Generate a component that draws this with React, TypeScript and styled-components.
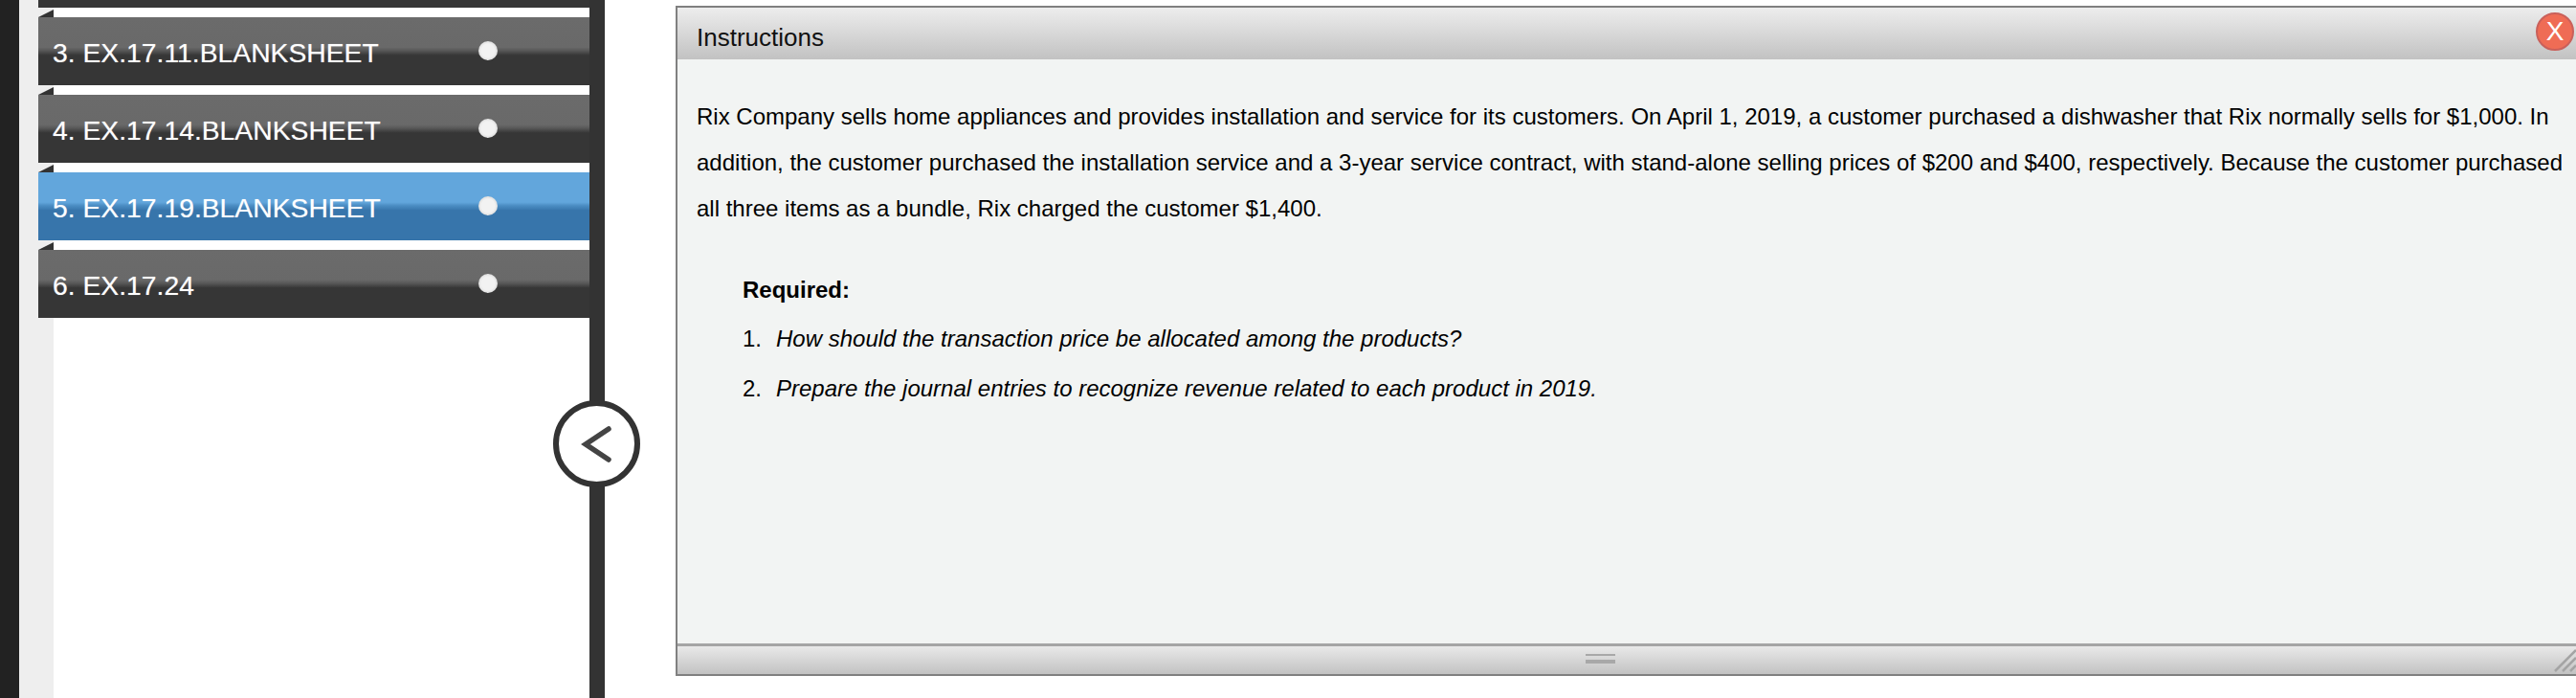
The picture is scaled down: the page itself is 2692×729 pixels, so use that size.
import React from 'react'
import styled, { createGlobalStyle } from 'styled-components'

const Global = createGlobalStyle`
html, body {
  margin: 0;
  padding: 0;
  background: #fff;
  overflow: hidden;
}
`

const items = [
  { label: '', active: false },
  { label: '3. EX.17.11.BLANKSHEET', active: false },
  { label: '4. EX.17.14.BLANKSHEET', active: false },
  { label: '5. EX.17.19.BLANKSHEET', active: true },
  { label: '6. EX.17.24', active: false },
]

const App = () => {
  return (
    <Page>
      <Global />
      <Sidebar>
        <Rail />
        <Gutter />
        <Menu>
          {items.map((item) => (
            <MenuItem key={item.label} $active={item.active}>
              <Notch />
              <Label>{item.label}</Label>
              {item.label && <Dot />}
            </MenuItem>
          ))}
        </Menu>
        <Divider />
        <Toggle>
          <svg width="40" height="46" viewBox="0 0 40 46">
            <path d="M32 7 L8 23 L32 39" fill="none" stroke="#444" strokeWidth="5.5" strokeLinecap="round" strokeLinejoin="miter" />
          </svg>
        </Toggle>
      </Sidebar>
      <Panel>
        <Header>
          Instructions
          <Close>X</Close>
        </Header>
        <Body>
          <Intro>
            Rix Company sells home appliances and provides installation and service for its customers. On April 1, 2019, a customer purchased a dishwasher that Rix normally sells for $1,000. In addition, the customer purchased the installation service and a 3-year service contract, with stand-alone selling prices of $200 and $400, respectively. Because the customer purchased all three items as a bundle, Rix charged the customer $1,400.
          </Intro>
          <Required>
            <RequiredTitle>Required:</RequiredTitle>
            <Question>
              <Num>1.</Num>
              <em>How should the transaction price be allocated among the products?</em>
            </Question>
            <Question>
              <Num>2.</Num>
              <em>Prepare the journal entries to recognize revenue related to each product in 2019.</em>
            </Question>
          </Required>
        </Body>
        <Footer>
          <Grip />
          <ResizeHandle>
            <svg width="24" height="24" viewBox="0 0 24 24">
              <path d="M2 23 L24 1 M10 23 L24 9 M18 23 L24 17" stroke="#a4a4a4" strokeWidth="2.5" fill="none" />
            </svg>
          </ResizeHandle>
        </Footer>
      </Panel>
    </Page>
  )
}

export default App

const Page = styled.div`
  display: flex;
  width: 2692px;
  height: 729px;
  overflow: hidden;
  font-family: "Liberation Sans", Arial, sans-serif;
`
const Sidebar = styled.div`
  position: relative;
  display: flex;
  flex: 0 0 632px;
  height: 729px;
`
const Rail = styled.div`
  flex: 0 0 20px;
  background: #222222;
`
const Gutter = styled.div`
  flex: 0 0 20px;
  background: #eeeeee;
`
const Menu = styled.div`
  flex: 0 0 576px;
  display: flex;
  flex-direction: column;
  gap: 10px;
  margin-top: -63px;
  background: linear-gradient(90deg, #eeeeee 16px, #ffffff 16px);
`
const MenuItem = styled.div<{ $active: boolean }>`
  position: relative;
  display: flex;
  align-items: center;
  flex: 0 0 71px;
  box-sizing: border-box;
  background: ${(p) =>
    p.$active
      ? 'linear-gradient(180deg, #62a6dc 0%, #62a6dc 44%, #4b8dc3 49%, #3775ab 56%, #3775ab 100%)'
      : 'linear-gradient(180deg, #6b6b6b 0%, #696969 44%, #585858 49%, #363636 56%, #363636 100%)'};
`
const Notch = styled.span`
  position: absolute;
  left: 0;
  top: -8px;
  width: 0;
  height: 0;
  border-bottom: 8px solid #333333;
  border-left: 16px solid transparent;
`
const Label = styled.span`
  padding: 2px 0 0 15px;
  color: #ffffff;
  font-size: 28.3px;
  line-height: 34px;
  white-space: nowrap;
  text-shadow: 0 0 1px rgba(255, 255, 255, 0.5);
`
const Dot = styled.span`
  position: absolute;
  left: 460px;
  top: 25px;
  width: 20px;
  height: 20px;
  border-radius: 50%;
  background: radial-gradient(circle, #f2f2f2 50%, #dcdcdc 72%, #a8a8a8 100%);
`
const Divider = styled.div`
  flex: 0 0 16px;
  background: #333333;
`
const Toggle = styled.div`
  position: absolute;
  left: 578px;
  top: 418px;
  box-sizing: border-box;
  width: 91px;
  height: 91px;
  display: flex;
  align-items: center;
  justify-content: center;
  border: 6px solid #333333;
  border-radius: 50%;
  background: #ffffff;
`
const Panel = styled.div`
  display: flex;
  flex-direction: column;
  flex: 0 0 1986px;
  box-sizing: border-box;
  height: 700px;
  margin: 6px 0 0 74px;
  border: 2px solid #808080;
  border-right: none;
  color: #000000;
`
const Header = styled.div`
  position: relative;
  flex: 0 0 54px;
  box-sizing: border-box;
  padding: 16px 0 0 20px;
  font-size: 26px;
  line-height: 30px;
  color: #111111;
  background: linear-gradient(180deg, #ededed, #c2c2c2);
`
const Close = styled.div`
  position: absolute;
  right: 2px;
  top: 5px;
  box-sizing: border-box;
  width: 40px;
  height: 40px;
  display: flex;
  align-items: center;
  justify-content: center;
  border: 2px solid #c9605a;
  border-radius: 50%;
  background: #ef6c55;
  color: #ffffff;
  font-size: 28px;
`
const Body = styled.div`
  flex: 1;
  padding: 36px 12px 0 20px;
  background: #f2f4f3;
  font-size: 24px;
  line-height: 48px;
`
const Intro = styled.div``
const Required = styled.div`
  margin-top: 37px;
  padding-left: 48px;
`
const RequiredTitle = styled.div`
  font-weight: bold;
  margin-bottom: 3px;
`
const Question = styled.div`
  display: flex;
  margin-bottom: 4px;
`
const Num = styled.span`
  flex: 0 0 35px;
`
const Footer = styled.div`
  position: relative;
  flex: 0 0 32px;
  box-sizing: border-box;
  display: flex;
  justify-content: center;
  padding: 8px 56px 0 0;
  border-top: 3px solid #a5a5a5;
  background: linear-gradient(180deg, #e9e9e9, #c2c2c2);
`
const Grip = styled.div`
  width: 31px;
  height: 10px;
  box-sizing: border-box;
  border-top: 2px solid #a8a8a8;
  border-bottom: 4px solid #a8a8a8;
`
const ResizeHandle = styled.div`
  position: absolute;
  right: 0;
  bottom: 2px;
  width: 24px;
  height: 24px;
  line-height: 0;
`
